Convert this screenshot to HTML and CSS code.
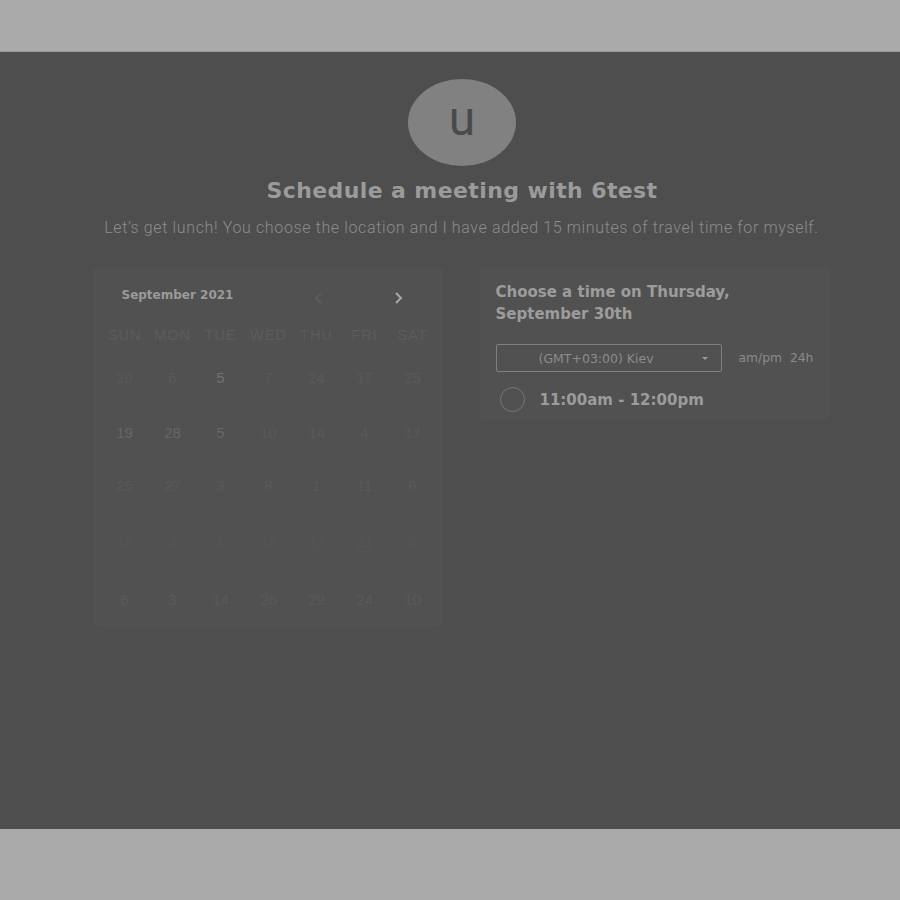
FILE: index.html
```html
<!DOCTYPE html>
<html>
<head>
<meta charset="utf-8">
<link rel="stylesheet" href="styles.css">
</head>
<body>
<div class="topbar"></div>
<main class="overlay">
  <div class="avatar"><span>u</span></div>
  <h1 class="title">Schedule a meeting with 6test</h1>
  <p class="subtitle">Let’s get lunch! You choose the location and I have added 15 minutes of travel time for myself.</p>
  <div class="columns">
    <section class="calendar">
      <div class="cal-head">
        <span class="month">September 2021</span>
        <span class="nav prev"><svg width="10" height="12" viewBox="0 0 10 12"><path d="M7 1 L2 6 L7 11" fill="none" stroke="currentColor" stroke-width="1.6"/></svg></span>
        <span class="nav next"><svg width="10" height="12" viewBox="0 0 10 12"><path d="M3 1 L8 6 L3 11" fill="none" stroke="currentColor" stroke-width="2"/></svg></span>
      </div>
      <div class="grid">
        <div class="dow">SUN</div><div class="dow">MON</div><div class="dow">TUE</div><div class="dow">WED</div><div class="dow">THU</div><div class="dow">FRI</div><div class="dow">SAT</div>
        <div class="d">20</div><div class="d">6</div><div class="d hi">5</div><div class="d">7</div><div class="d">24</div><div class="d">17</div><div class="d">25</div>
        <div class="d mid">19</div><div class="d mid">28</div><div class="d mid">5</div><div class="d">10</div><div class="d">14</div><div class="d">4</div><div class="d">17</div>
        <div class="d">25</div><div class="d">27</div><div class="d">3</div><div class="d">8</div><div class="d">1</div><div class="d">11</div><div class="d">6</div>
        <div class="d lo">15</div><div class="d lo">3</div><div class="d lo">1</div><div class="d lo">12</div><div class="d lo">17</div><div class="d lo">21</div><div class="d lo">8</div>
        <div class="d">6</div><div class="d">3</div><div class="d">14</div><div class="d">26</div><div class="d">29</div><div class="d">24</div><div class="d">10</div>
      </div>
    </section>
    <section class="times">
      <h2 class="times-title">Choose a time on Thursday, September 30th</h2>
      <div class="tz-row">
        <div class="select"><span>(GMT+03:00) Kiev</span><span class="caret"></span></div>
        <div class="fmt"><span>am/pm</span><span>24h</span></div>
      </div>
      <div class="slot"><span class="radio"></span><span class="slot-text">11:00am - 12:00pm</span></div>
    </section>
  </div>
</main>
<div class="bottombar"></div>
</body>
</html>
```
FILE: styles.css
```css
html, body {
  margin: 0;
  padding: 0;
  background: #aaaaaa;
}
body {
  width: 900px;
  height: 900px;
  font-family: Roboto, "Liberation Sans", sans-serif;
}
.topbar {
  height: 51px;
  background: #aaaaaa;
  border-bottom: 1px solid #9a9a9a;
}
.bottombar {
  height: 71px;
  background: #aaaaaa;
}
.overlay {
  height: 777px;
  background: #4e4e4e;
  display: flex;
  flex-direction: column;
  align-items: center;
  box-sizing: border-box;
  padding-top: 27px;
}
.avatar {
  width: 108px;
  height: 87px;
  border-radius: 50%;
  background: #818181;
  display: flex;
  align-items: center;
  justify-content: center;
  margin-left: 24px;
}
.avatar span {
  color: #4a4a4a;
  font-family: Roboto, sans-serif;
  font-size: 48px;
  line-height: 1;
  margin-top: -8px;
}
.title {
  margin: 12px 0 0 24px;
  font-family: "DejaVu Sans", sans-serif;
  font-weight: 700;
  font-size: 22px;
  line-height: 26px;
  color: #9b9b9b;
  letter-spacing: 0.4px;
}
.subtitle {
  margin: 14px 0 0 23px;
  font-family: Roboto, sans-serif;
  font-weight: 300;
  font-size: 16px;
  line-height: 20px;
  color: #8c8c8c;
  letter-spacing: 0.63px;
}
.columns {
  display: flex;
  gap: 37px;
  margin-top: 29px;
  margin-left: 22px;
  align-items: flex-start;
}
.calendar {
  width: 350px;
  height: 360px;
  background: #515151;
  border-radius: 4px;
  box-sizing: border-box;
  padding: 19px 8px 0 8px;
}
.cal-head {
  display: flex;
  align-items: center;
  height: 18px;
}
.month {
  margin-left: 21px;
  font-family: "DejaVu Sans", sans-serif;
  font-weight: 700;
  font-size: 12px;
  color: #9a9a9a;
  width: 190px;
}
.nav {
  display: flex;
  margin-top: 6px;
}
.prev { color: #5e5e5e; margin-left: 2px; }
.next { color: #a8a8a8; margin-left: 69px; }
.grid {
  display: grid;
  grid-template-columns: repeat(7, 48px);
  grid-template-rows: 43px 55px 53px 56px 58px 40px;
  margin-top: 21px;
  margin-left: 0px;
}
.dow {
  text-align: center;
  font-family: "Liberation Sans", sans-serif;
  font-size: 14.5px;
  letter-spacing: 1px;
  color: #5c5c5c;
  line-height: 20px;
  align-self: start;
}
.d {
  text-align: center;
  font-family: "Liberation Sans", sans-serif;
  font-size: 15px;
  color: #595959;
  line-height: 20px;
  align-self: start;
}
.d.hi { color: #727272; }
.d.mid { color: #676767; }
.d.lo { color: #555555; }
.times {
  width: 350px;
  height: 153px;
  background: #515151;
  border-radius: 4px;
  box-sizing: border-box;
  padding: 14px 16px 0 16px;
}
.times-title {
  margin: 0;
  font-family: "DejaVu Sans", sans-serif;
  font-weight: 700;
  font-size: 15px;
  line-height: 22px;
  color: #9c9c9c;
  width: 280px;
}
.tz-row {
  display: flex;
  align-items: center;
  margin-top: 19px;
}
.select {
  width: 226px;
  height: 28px;
  box-sizing: border-box;
  border: 1px solid #808080;
  border-radius: 2px;
  display: flex;
  align-items: center;
  padding-left: 42px;
  padding-right: 13px;
  font-family: "DejaVu Sans", sans-serif;
  font-size: 12.5px;
  color: #8c8c8c;
}
.select span:first-child { flex: 1; }
.caret {
  width: 0;
  height: 0;
  border-left: 3px solid transparent;
  border-right: 3px solid transparent;
  border-top: 3px solid #9a9a9a;
}
.fmt {
  margin-left: 17px;
  display: flex;
  gap: 8px;
  font-family: "DejaVu Sans", sans-serif;
  font-size: 12.3px;
  color: #8a8a8a;
}
.slot {
  display: flex;
  align-items: center;
  margin-top: 15px;
  margin-left: 4px;
}
.radio {
  width: 23px;
  height: 23px;
  border: 1px solid #767676;
  border-radius: 50%;
}
.slot-text {
  margin-left: 15px;
  font-family: "DejaVu Sans", sans-serif;
  font-weight: 700;
  font-size: 15px;
  color: #9c9c9c;
}
```
